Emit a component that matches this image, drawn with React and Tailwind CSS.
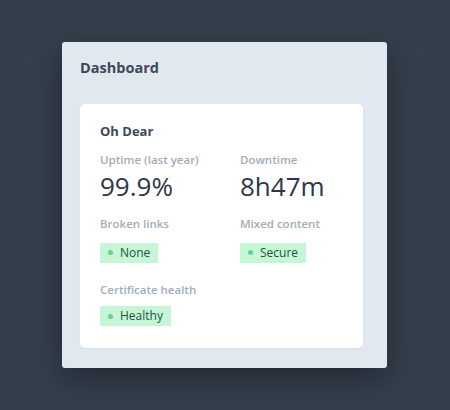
export default function App() {
  const Badge = ({ children }) => (
    <span className="inline-flex items-center gap-[7px] h-[20px] pl-[8px] pr-[8px] bg-[#c6f6d5] text-[#22543d] text-[12px] font-medium">
      <span className="w-[5px] h-[5px] rounded-full bg-[#68d391]" />
      {children}
    </span>
  )

  const label = 'text-[11.5px] font-semibold text-[#a3acb9] leading-[14px]'

  return (
    <div
      className="w-[450px] h-[410px] bg-[#343f4c] pt-[42px] pl-[62px]"
      style={{ fontFamily: '"Open Sans", "Noto Sans", sans-serif' }}
    >
      <div className="w-[325px] h-[326px] bg-[#e2e8f0] rounded-[3px] shadow-[0_10px_30px_rgba(0,0,0,0.35)] pt-[16px] pl-[18px]">
        <h1 className="text-[14.5px] font-bold text-[#3c4858] leading-[20px]">Dashboard</h1>
        <div className="mt-[26px] w-[283px] h-[244px] bg-white rounded-[5px] shadow-[0_1px_2px_rgba(0,0,0,0.05)] pt-[18px] px-[20px]">
          <h2 className="text-[13px] font-bold text-[#3c4858] leading-[18px]">Oh Dear</h2>
          <div className="grid grid-cols-[140px_1fr] mt-[13px]">
            <div>
              <div className={label}>Uptime (last year)</div>
              <div className="text-[26px] text-[#2d3748] leading-[32px] mt-[3px]">99.9%</div>
            </div>
            <div>
              <div className={label}>Downtime</div>
              <div className="text-[26px] text-[#2d3748] leading-[32px] mt-[3px]">8h47m</div>
            </div>
            <div className="mt-[15px]">
              <div className={label}>Broken links</div>
              <div className="mt-[6px]"><Badge>None</Badge></div>
            </div>
            <div className="mt-[15px]">
              <div className={label}>Mixed content</div>
              <div className="mt-[6px]"><Badge>Secure</Badge></div>
            </div>
            <div className="mt-[20px]">
              <div className={label}>Certificate health</div>
              <div className="mt-[4px]"><Badge>Healthy</Badge></div>
            </div>
          </div>
        </div>
      </div>
    </div>
  )
}
